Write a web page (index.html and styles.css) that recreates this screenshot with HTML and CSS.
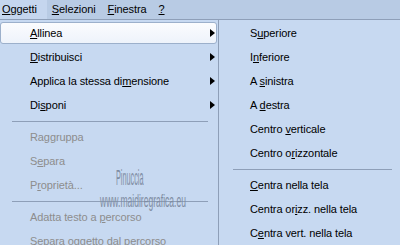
FILE: index.html
```html
<!DOCTYPE html>
<html lang="it">
<head>
<meta charset="utf-8">
<link rel="stylesheet" href="styles.css">
</head>
<body>
<div class="menubar">
  <span class="mb-item active"><u>O</u>ggetti</span>
  <span class="mb-item"><u>S</u>elezioni</span>
  <span class="mb-item"><u>F</u>inestra</span>
  <span class="mb-item"><u>?</u></span>
</div>
<div class="menus">
  <div class="menu main">
    <div class="row hl"><span><u>A</u>llinea</span><i class="arrow"></i></div>
    <div class="row"><span><u>D</u>istribuisci</span><i class="arrow"></i></div>
    <div class="row"><span>Applica la stessa di<u>m</u>ensione</span><i class="arrow"></i></div>
    <div class="row"><span>Di<u>s</u>poni</span><i class="arrow"></i></div>
    <div class="sep"></div>
    <div class="row dis"><span>Raggruppa</span></div>
    <div class="row dis"><span>S<u>e</u>para</span></div>
    <div class="row dis"><span>P<u>r</u>oprietà...</span></div>
    <div class="sep"></div>
    <div class="row dis"><span>Adatta testo a <u>p</u>ercorso</span></div>
    <div class="row dis"><span>Separa oggetto dal percorso</span></div>
    <div class="wm1">Pinuccia</div>
    <div class="wm2">www.maidiregrafica.eu</div>
  </div>
  <div class="menu sub">
    <div class="row"><span>S<u>u</u>periore</span></div>
    <div class="row"><span>I<u>n</u>feriore</span></div>
    <div class="row"><span>A <u>s</u>inistra</span></div>
    <div class="row"><span>A <u>d</u>estra</span></div>
    <div class="row"><span>Centro <u>v</u>erticale</span></div>
    <div class="row"><span>Centro o<u>r</u>izzontale</span></div>
    <div class="sep"></div>
    <div class="row"><span><u>C</u>entra nella tela</span></div>
    <div class="row"><span>Centra or<u>i</u>zz. nella tela</span></div>
    <div class="row"><span>C<u>e</u>ntra vert. nella tela</span></div>
  </div>
</div>
</body>
</html>
```

FILE: styles.css
```css
html, body {
  margin: 0;
  padding: 0;
  width: 400px;
  height: 245px;
  overflow: hidden;
  background: #c7d9f1;
  font-family: "Liberation Sans", Arial, sans-serif;
  font-size: 11px;
  letter-spacing: -0.1px;
  color: #000;
}
u { text-decoration: underline; text-underline-offset: 1px; }

.menubar {
  height: 19px;
  border-bottom: 1px solid #8e9fb8;
  background: #b8cbe4;
  display: flex;
  align-items: center;
}
.mb-item {
  height: 19px;
  line-height: 18px;
  padding: 0 7px 0 5px;
}
.mb-item.active {
  padding: 0 10px 0 2px;
  background: #c5d6ee;
}

.menus {
  display: flex;
  height: 225px;
}
.menu {
  padding-top: 1px;
}
.main {
  width: 218px;
  position: relative;
}
.sub {
  flex: 1;
  border-left: 1px solid #8e9fb8;
}

.row {
  height: 24px;
  display: flex;
  align-items: center;
  padding-left: 30px;
  padding-right: 3px;
  box-sizing: border-box;
}
.sub .row { padding-left: 31px; }
.row span { flex: 1; white-space: nowrap; }
.row.hl {
  margin: 1px 1px 1px 0;
  height: 22px;
  padding-left: 29px;
  padding-right: 1px;
  border: 1px solid #9cb0cb;
  border-radius: 3px;
  background: linear-gradient(#fbfcfe, #eef3fb);
}
.row.dis { color: #8d8d8d; }

.arrow {
  width: 0;
  height: 0;
  border-top: 4px solid transparent;
  border-bottom: 4px solid transparent;
  border-left: 5px solid #000;
}

.sep {
  height: 8px;
  display: flex;
  align-items: center;
  padding: 0 10px 0 12px;
}
.sep::before {
  content: "";
  flex: 1;
  height: 1px;
  background: #8e9fb8;
}
.sub .sep { padding: 0 8px 0 14px; }

.wm1, .wm2 {
  position: absolute;
  color: #7f8da3;
  font-family: "Liberation Sans", sans-serif;
  letter-spacing: 0;
  white-space: nowrap;
  transform-origin: 0 0;
  pointer-events: none;
}
.wm1 {
  left: 116px;
  top: 147px;
  font-size: 22px;
  line-height: 22px;
  transform: scaleX(0.33);
}
.wm2 {
  left: 100px;
  top: 171px;
  font-size: 19px;
  line-height: 20px;
  transform: scaleX(0.45);
}
```
